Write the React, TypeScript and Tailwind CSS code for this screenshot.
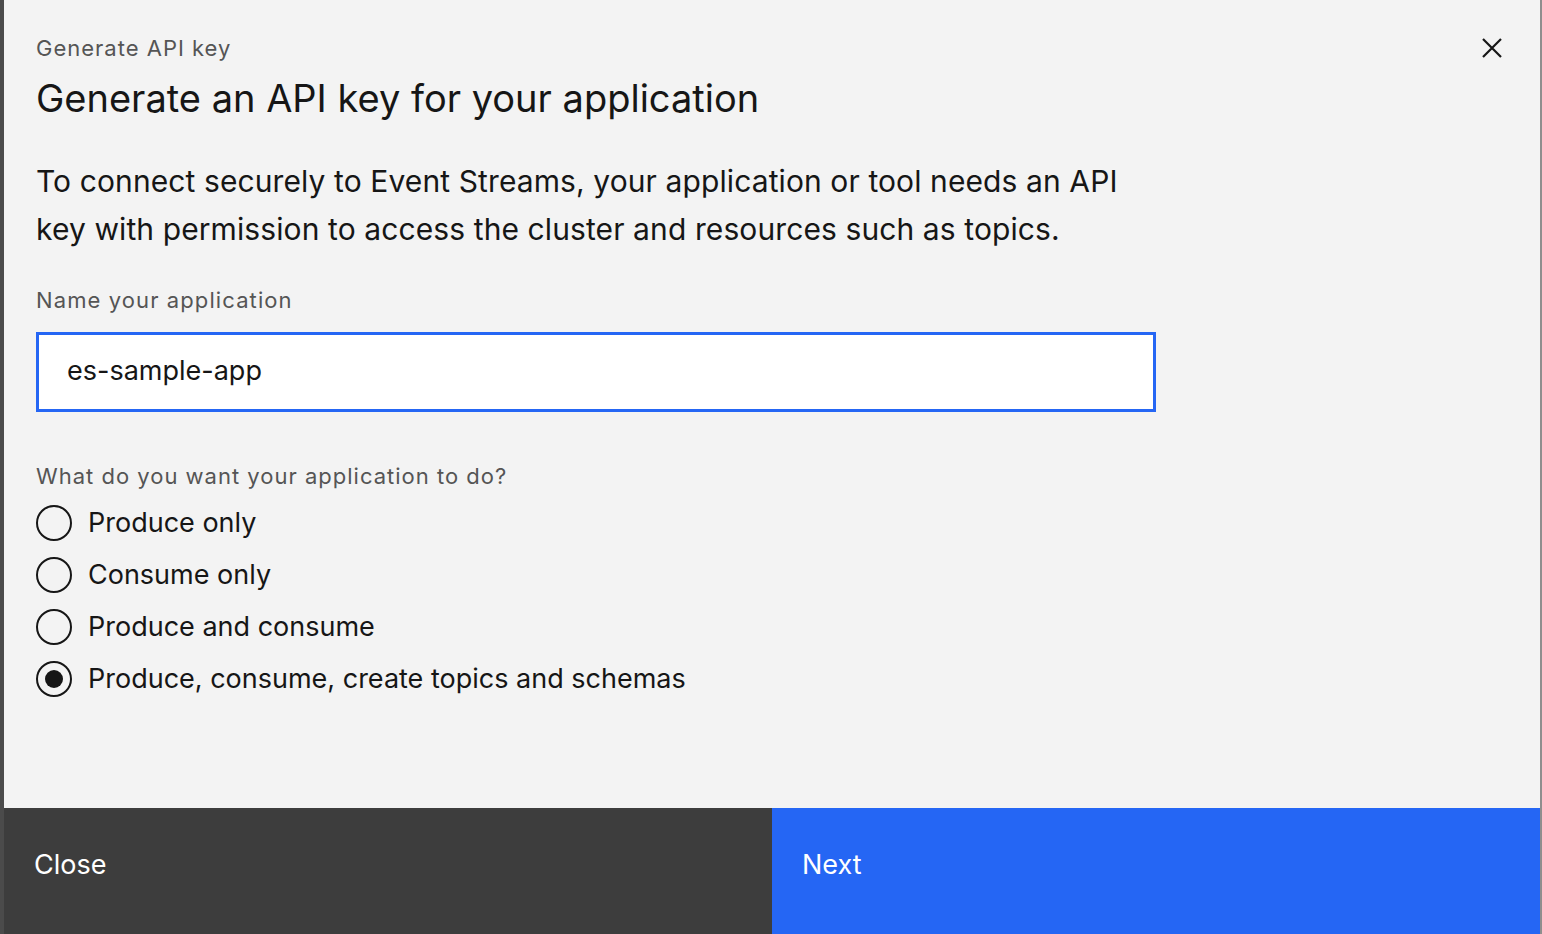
import React, { useState } from 'react';

const options = [
  'Produce only',
  'Consume only',
  'Produce and consume',
  'Produce, consume, create topics and schemas',
];

const App: React.FC = () => {
  const [appName, setAppName] = useState('es-sample-app');
  const [choice, setChoice] = useState(3);

  return (
    <div className="w-[1542px] h-[934px] flex overflow-hidden font-['Inter','Noto_Sans',sans-serif] text-[#161616]">
      <div className="w-[4px] bg-[#4b4b4b]" />
      <div className="flex-1 bg-[#f3f3f3] flex flex-col">
        {/* header */}
        <div className="flex justify-between pl-[32px] pr-[36px] pt-[34px]">
          <div>
            <p className="text-[22px] leading-[28px] text-[#555555] tracking-[1px]">Generate API key</p>
            <h2 className="mt-[14px] text-[38px] leading-[44px]">Generate an API key for your application</h2>
          </div>
          <button className="w-[24px] h-[24px] mt-[2px] text-[#161616]">
            <svg viewBox="0 0 24 24" className="w-[24px] h-[24px]" fill="none" stroke="currentColor" strokeWidth="2.2">
              <path d="M3 3 L21 21 M21 3 L3 21" />
            </svg>
          </button>
        </div>

        {/* body */}
        <div className="pl-[32px] pt-[37px] flex-1">
          <p className="text-[30px] leading-[48px] tracking-[0.1px]">
            To connect securely to Event Streams, your application or tool needs an API
            <br />
            key with permission to access the cluster and resources such as topics.
          </p>

          <label className="block mt-[33px] text-[22px] leading-[28px] text-[#555555] tracking-[1.1px]">Name your application</label>
          <input
            value={appName}
            onChange={(e) => setAppName(e.target.value)}
            className="mt-[18px] w-[1120px] h-[80px] bg-white border-[3px] border-[#2566f4] px-[28px] pb-[3px] text-[27px] outline-none"
          />

          <p className="mt-[50px] text-[22px] leading-[28px] text-[#555555] tracking-[1px]">What do you want your application to do?</p>
          <div className="mt-[7px] flex flex-col">
            {options.map((o, i) => (
              <label key={o} className="flex items-center gap-[16px] h-[52px] cursor-pointer" onClick={() => setChoice(i)}>
                <span className="w-[36px] h-[36px] rounded-full border-[2px] border-[#161616] flex items-center justify-center">
                  {choice === i && <span className="w-[18px] h-[18px] rounded-full bg-[#161616]" />}
                </span>
                <span className="text-[27px] leading-[36px]">{o}</span>
              </label>
            ))}
          </div>
        </div>

        {/* footer */}
        <div className="h-[126px] flex">
          <button className="w-1/2 bg-[#3d3d3d] text-white text-[27px] text-left pl-[30px] pb-[12px]">Close</button>
          <button className="w-1/2 bg-[#2566f4] text-white text-[27px] text-left pl-[30px] pb-[12px]">Next</button>
        </div>
      </div>
      <div className="w-[2px] bg-[#8e8e8e]" />
    </div>
  );
};

export default App;
